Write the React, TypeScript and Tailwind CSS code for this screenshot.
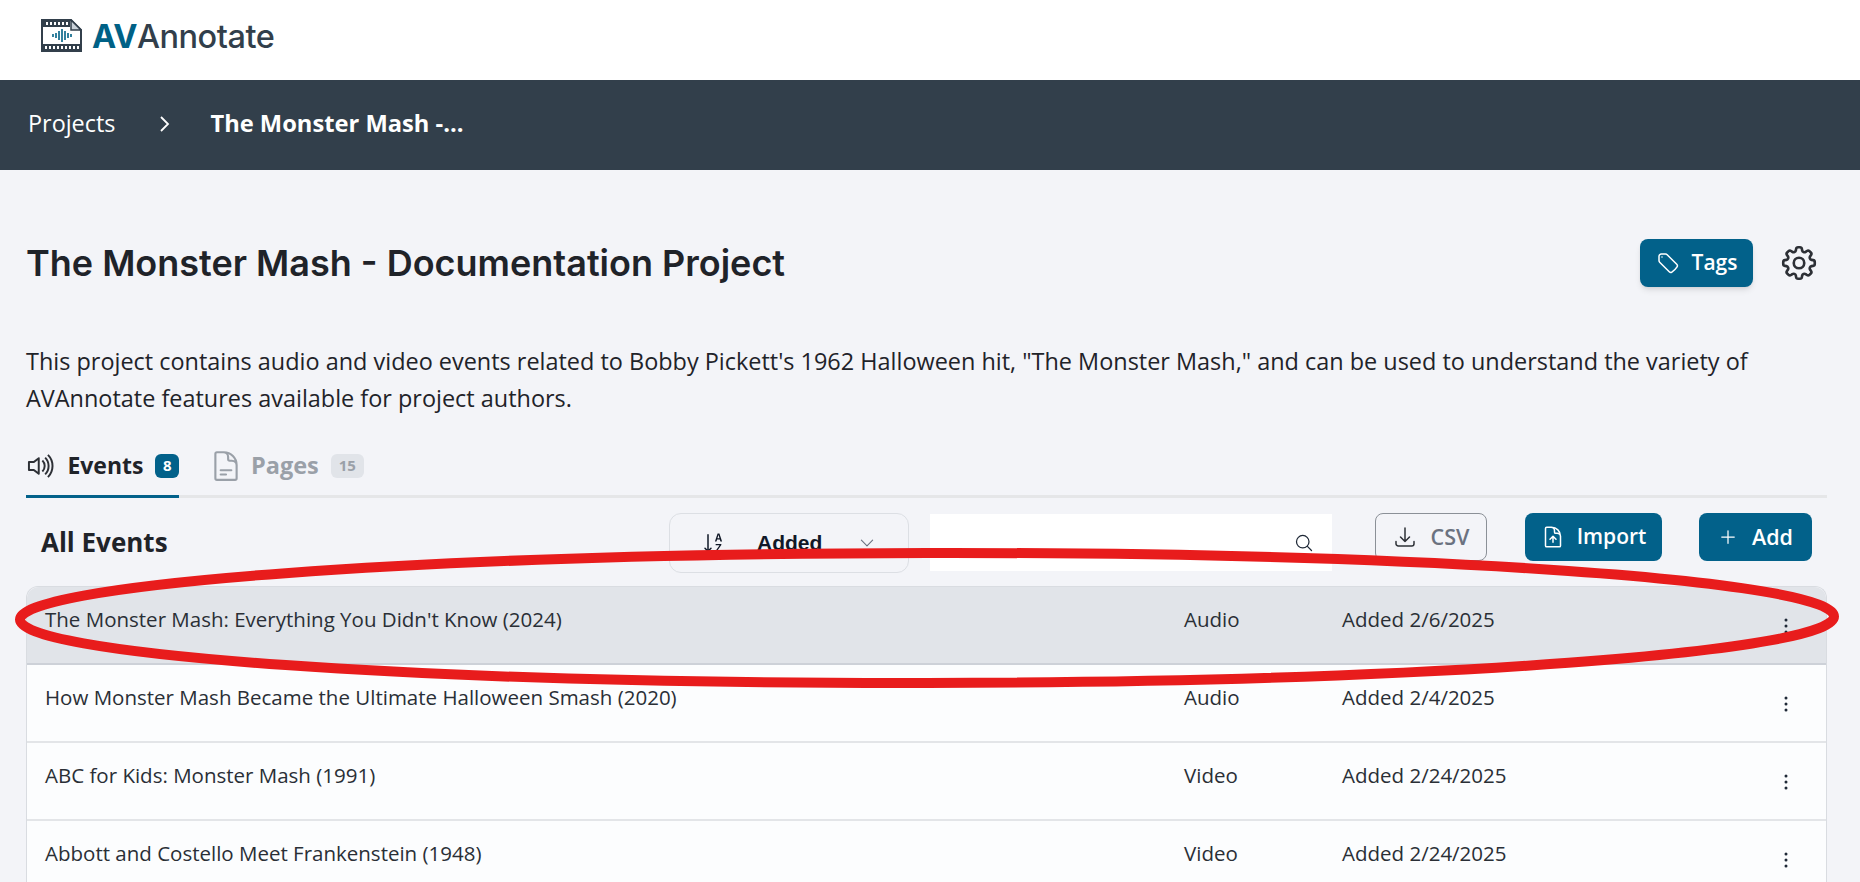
import React from "react";
import { BsSortAlphaDown, BsVolumeUp } from "react-icons/bs";
import {
  HiOutlineArrowDownTray,
  HiOutlineChevronDown,
  HiOutlineCog8Tooth,
  HiOutlineDocumentArrowUp,
  HiOutlineDocumentText,
  HiOutlineEllipsisVertical,
  HiOutlineMagnifyingGlass,
  HiOutlinePlus,
  HiOutlineTag,
} from "react-icons/hi2";

const events = [
  { title: "The Monster Mash: Everything You Didn't Know (2024)", type: "Audio", added: "Added 2/6/2025" },
  { title: "How Monster Mash Became the Ultimate Halloween Smash (2020)", type: "Audio", added: "Added 2/4/2025" },
  { title: "ABC for Kids: Monster Mash (1991)", type: "Video", added: "Added 2/24/2025" },
  { title: "Abbott and Costello Meet Frankenstein (1948)", type: "Video", added: "Added 2/24/2025" },
];

function Logo() {
  return (
    <svg width="41" height="33" viewBox="0 0 41 33" className="shrink-0">
      <path d="M1 1h29l10 10v21H1z" fill="#fff" stroke="#323f4b" strokeWidth="2" />
      <path d="M1 1h28v7H1zM1 25h39v7H1z" fill="#323f4b" />
      <path d="M30 1l10 10H30z" fill="#c9d1d8" stroke="#323f4b" strokeWidth="1.5" />
      <path
        d="M5 3h2v3H5zM9 3h2v3H9zM13 3h2v3h-2zM17 3h2v3h-2zM21 3h2v3h-2zM25 3h2v3h-2zM4 27h2v3H4zM8 27h2v3H8zM12 27h2v3h-2zM16 27h2v3h-2zM20 27h2v3h-2zM24 27h2v3h-2zM28 27h2v3h-2zM32 27h2v3h-2zM36 27h2v3h-2z"
        fill="#fff"
      />
      <path
        d="M12 15v3M15 14v5M18 12v9M21 10v13M24 12v9M27 14v5M30 15v3"
        stroke="#006186"
        strokeWidth="1.6"
        fill="none"
      />
    </svg>
  );
}

function EventRow({ title, type, added, active }: { title: string; type: string; added: string; active: boolean }) {
  return (
    <div
      className={`flex h-[78px] items-start border-b-2 pl-[18px] pt-[18px] text-[20.5px] leading-[28px] text-[#2a2f36] ${
        active ? "rounded-t-xl border-[#cdd1d8] bg-[#e1e4e9]" : "border-[#e3e5e8] bg-[#fcfdfe]"
      }`}
    >
      <div className="w-[1139px] shrink-0">{title}</div>
      <div className="w-[158px] shrink-0">{type}</div>
      <div className="w-[432px] shrink-0">{added}</div>
      <HiOutlineEllipsisVertical className="mt-[9px] h-6 w-6 shrink-0 text-[#1f2937]" />
    </div>
  );
}

export default function App() {
  return (
    <div className="h-[882px] overflow-hidden bg-[#f3f4f8] font-['Open_Sans',sans-serif] text-[#1f2329]">
      <header className="flex h-[80px] items-start gap-[10px] bg-white pl-[41px] pt-[19px]">
        <Logo />
        <div className="font-['Inter',sans-serif] text-[32.5px] font-medium leading-[36px] tracking-[-0.5px] text-[#323f4b]">
          <span className="font-bold text-[#006186]">AV</span>Annotate
        </div>
      </header>

      <nav className="flex h-[90px] items-center bg-[#323f4b] pb-[2px] pl-[28px] text-[23.4px] text-white">
        <span>Projects</span>
        <svg width="12" height="18" viewBox="0 0 12 18" className="ml-[44px] mr-[39px]" fill="none" stroke="#fff" strokeWidth="1.8">
          <path d="M2 2l7 7-7 7" />
        </svg>
        <span className="text-[23.7px] font-bold">The Monster Mash -...</span>
      </nav>

      <main className="pl-[26px] pr-[33px]">
        <div className="flex h-[184px] items-start justify-between pt-[69px]">
          <h1 className="font-['Inter',sans-serif] text-[36px] font-semibold leading-[48px]">
            The Monster Mash - Documentation Project
          </h1>
          <div className="flex items-center">
            <button className="flex h-[48px] w-[113px] items-center justify-center gap-[12px] rounded-lg bg-[#02618a] text-[21px] font-semibold text-white shadow-md">
              <HiOutlineTag className="h-6 w-6" />
              Tags
            </button>
            <HiOutlineCog8Tooth className="ml-[25px] mr-[7px] h-[42px] w-[42px] text-[#2d3036]" />
          </div>
        </div>

        <p className="-mt-[11px] h-[76px] text-[23.45px] leading-[37px]">
          This project contains audio and video events related to Bobby Pickett's 1962 Halloween hit, "The Monster Mash," and can be used to understand the variety of AVAnnotate features available for project authors.
        </p>

        <div className="mt-[21px] flex h-[58px] border-b-[3px] border-[#e5e6e8]">
          <div className="-mb-[3px] flex w-[153px] items-center border-b-[3px] border-[#02618a] pb-[4px]">
            <BsVolumeUp className="h-8 w-8 text-[#2d3036]" />
            <span className="ml-[10px] text-[23px] font-bold">Events</span>
            <span className="ml-[12px] flex h-[24px] w-[24px] items-center justify-center rounded-md bg-[#02618a] text-[15px] font-bold text-white">
              8
            </span>
          </div>
          <div className="flex items-center pb-[4px] pl-[30px] text-[#9aa0a8]">
            <HiOutlineDocumentText className="h-[34px] w-[34px]" />
            <span className="ml-[8px] text-[23.5px] font-bold">Pages</span>
            <span className="ml-[12px] flex h-[24px] w-[33px] items-center justify-center rounded-md bg-[#e1e4e9] text-[15px] font-bold">
              15
            </span>
          </div>
        </div>

        <div className="flex h-[88px] items-start pt-[2px]">
          <h2 className="ml-[15px] mt-[24px] w-[628px] text-[26px] font-bold leading-[36px]">All Events</h2>
          <div className="mt-[13px] flex h-[60px] w-[240px] items-center rounded-xl border border-[#dcdfe4] pl-[32px] font-['Liberation_Sans',sans-serif] text-[21px] font-semibold text-[#111827]">
            <BsSortAlphaDown className="h-6 w-6" />
            <span className="ml-[31px]">Added</span>
            <HiOutlineChevronDown className="ml-[36px] h-[18px] w-[18px] text-[#6b7280]" />
          </div>
          <div className="ml-[21px] mt-[14px] flex h-[57px] w-[402px] items-center justify-end bg-white pr-[18px]">
            <HiOutlineMagnifyingGlass className="h-5 w-5 text-[#1f2937]" />
          </div>
          <button className="ml-[43px] mt-[13px] flex h-[48px] w-[112px] items-center justify-center gap-[14px] rounded-lg border border-[#8b9097] text-[21.5px] font-semibold text-[#6b7280]">
            <HiOutlineArrowDownTray className="h-6 w-6 text-[#2d3036]" />
            CSV
          </button>
          <button className="ml-[38px] mt-[13px] flex h-[48px] w-[137px] items-center justify-center gap-[12px] rounded-lg bg-[#02618a] text-[21px] font-semibold text-white">
            <HiOutlineDocumentArrowUp className="h-6 w-6" />
            Import
          </button>
          <button className="ml-[37px] mt-[13px] flex h-[48px] w-[113px] items-center justify-center gap-[14px] rounded-lg bg-[#02618a] text-[21.5px] font-semibold text-white">
            <HiOutlinePlus className="h-5 w-5" />
            Add
          </button>
        </div>

        <div className="relative">
          <div className="rounded-t-xl border-x border-t border-[#d9dce1]">
            {events.map((ev, i) => (
              <EventRow key={ev.title} {...ev} active={i === 0} />
            ))}
          </div>
          {/* hand drawn highlight over the first row */}
          <svg width="1860" height="160" viewBox="0 0 1860 160" className="pointer-events-none absolute -left-[26px] -top-[45px]" fill="none">
            <ellipse cx="927" cy="77" rx="907" ry="65" transform="rotate(-0.1 927 77)" stroke="#e81c1c" strokeWidth="10" />
          </svg>
        </div>
      </main>
    </div>
  );
}
